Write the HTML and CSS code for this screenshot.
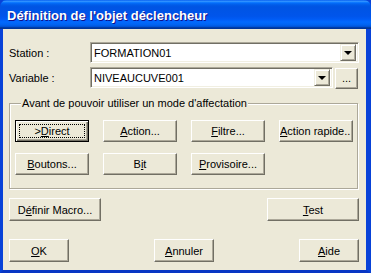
FILE: index.html
```html
<!DOCTYPE html>
<html lang="fr">
<head>
    <meta charset="UTF-8">
    <title>Définition de l'objet déclencheur</title>
    <link rel="stylesheet" href="styles.css">
</head>
<body>
    <div class="window">
        <div class="titlebar">
            <span class="title">Définition de l'objet déclencheur</span>
        </div>
        <div class="client">
            <div class="field-row">
                <label class="field-label">Station :</label>
                <div class="combo combo-station">
                    <span class="combo-text">FORMATION01</span>
                    <span class="drop-btn"><span class="arrow"></span></span>
                </div>
            </div>
            <div class="field-row row-variable">
                <label class="field-label">Variable :</label>
                <div class="combo combo-variable">
                    <span class="combo-text">NIVEAUCUVE001</span>
                    <span class="drop-btn"><span class="arrow"></span></span>
                </div>
                <button class="btn btn-browse">...</button>
            </div>

            <fieldset class="group">
                <legend>Avant de pouvoir utiliser un mode d'affectation</legend>
                <div class="mode-grid">
                    <button class="btn btn-mode btn-default">&gt;<u>D</u>irect</button>
                    <button class="btn btn-mode"><u>A</u>ction...</button>
                    <button class="btn btn-mode"><u>F</u>iltre...</button>
                    <button class="btn btn-mode btn-tight"><u>A</u>ction rapide..</button>
                    <button class="btn btn-mode"><u>B</u>outons...</button>
                    <button class="btn btn-mode">B<u>i</u>t</button>
                    <button class="btn btn-mode"><u>P</u>rovisoire...</button>
                </div>
            </fieldset>

            <div class="action-row">
                <button class="btn btn-wide">D<u>é</u>finir Macro...</button>
                <button class="btn btn-wide"><u>T</u>est</button>
            </div>

            <div class="footer">
                <button class="btn btn-small"><u>O</u>K</button>
                <button class="btn btn-small"><u>A</u>nnuler</button>
                <button class="btn btn-small"><u>A</u>ide</button>
            </div>
        </div>
    </div>
</body>
</html>
```

FILE: styles.css
```css
body {
    margin: 0;
    background-color: #ffffff;
    font-family: "Liberation Sans", Arial, sans-serif;
    font-size: 11px;
    color: #000000;
}
.window {
    width: 371px;
    height: 273px;
    box-sizing: border-box;
    background-color: #0054e3;
    border-left: 3px solid #0842d8;
    border-right: 5px solid #0842d8;
    border-bottom: 3px solid #0836c4;
    display: flex;
    flex-direction: column;
}
.titlebar {
    height: 29px;
    margin: 0 -5px 0 -3px;
    padding-left: 7px;
    display: flex;
    align-items: center;
    padding-top: 2px;
    box-sizing: border-box;
    border-radius: 7px 7px 0 0;
    background: linear-gradient(to bottom, #0058ee 0%, #3593ff 4%, #288eff 6%, #127dff 8%, #036ffc 10%, #0262ee 14%, #0057e5 20%, #0054e3 24%, #0055eb 56%, #005bf5 66%, #026afe 76%, #0062ef 86%, #0052d6 92%, #0040ab 94%, #003092 100%);
}
.title {
    font-weight: bold;
    font-size: 13px;
    color: #ffffff;
    text-shadow: 1px 1px #0f1089;
    letter-spacing: 0;
}
.client {
    flex: 1;
    background-color: #ece9d8;
    padding: 13px 7px 8px 6px;
    display: flex;
    flex-direction: column;
}

/* champs Station / Variable */
.field-row {
    display: flex;
    align-items: center;
    height: 21px;
}
.row-variable {
    margin-top: 4px;
}
.field-label {
    width: 81px;
}
.combo {
    height: 21px;
    box-sizing: border-box;
    background-color: #ffffff;
    border: 1px solid;
    border-color: #aca899 #ffffff #ffffff #aca899;
    box-shadow: inset 1px 1px #716f64, inset -1px -1px #f1efe2;
    display: flex;
    align-items: center;
    padding: 2px 2px 2px 3px;
}
.combo-station {
    width: 269px;
}
.combo-variable {
    width: 243px;
}
.combo-text {
    flex: 1;
    padding-top: 1px;
}
.drop-btn {
    width: 16px;
    height: 17px;
    box-sizing: border-box;
    background-color: #ece9d8;
    border: 1px solid;
    border-color: #f1efe2 #716f64 #716f64 #f1efe2;
    box-shadow: inset 1px 1px #ffffff, inset -1px -1px #aca899;
    display: flex;
    align-items: center;
    justify-content: center;
}
.arrow {
    width: 0;
    height: 0;
    border-left: 4px solid transparent;
    border-right: 4px solid transparent;
    border-top: 4px solid #000000;
    margin-top: 1px;
}

/* boutons */
.btn {
    font-family: "Liberation Sans", Arial, sans-serif;
    font-size: 11px;
    color: #000000;
    background-color: #ece9d8;
    border: 1px solid;
    border-color: #ffffff #716f64 #716f64 #ffffff;
    box-shadow: inset -1px -1px #aca899;
    padding: 0;
    margin: 0;
    height: 23px;
    white-space: nowrap;
    overflow: hidden;
}
.btn u {
    text-underline-offset: 1px;
}
.btn-browse {
    width: 23px;
    height: 21px;
    margin-left: 2px;
    margin-top: 1px;
}
.btn-mode {
    width: 74px;
    height: 22px;
}
.btn-tight {
    text-align: right;
    padding-right: 4px;
}
.btn-default {
    border-color: #000000;
    box-shadow: inset 1px 1px #ffffff, inset -1px -1px #716f64, inset -2px -2px #aca899;
    outline: 1px dotted #000000;
    outline-offset: -5px;
}
.btn-wide {
    width: 92px;
}
.btn-small {
    width: 60px;
}

/* groupe */
.group {
    margin: 9px 1px 0 0;
    padding: 10px 0 13px 5px;
    border: 1px solid #aca899;
    box-shadow: inset 1px 1px #ffffff, 1px 1px #ffffff;
    min-width: 0;
}
.group legend {
    padding: 0 1px;
    margin-left: 6px;
    line-height: 13px;
    background-color: #ece9d8;
}
.mode-grid {
    display: grid;
    grid-template-columns: repeat(4, 74px);
    column-gap: 14px;
    row-gap: 11px;
}

.action-row {
    display: flex;
    justify-content: space-between;
    margin-top: 9px;
}
.footer {
    display: flex;
    justify-content: space-between;
    margin-top: auto;
}
```
